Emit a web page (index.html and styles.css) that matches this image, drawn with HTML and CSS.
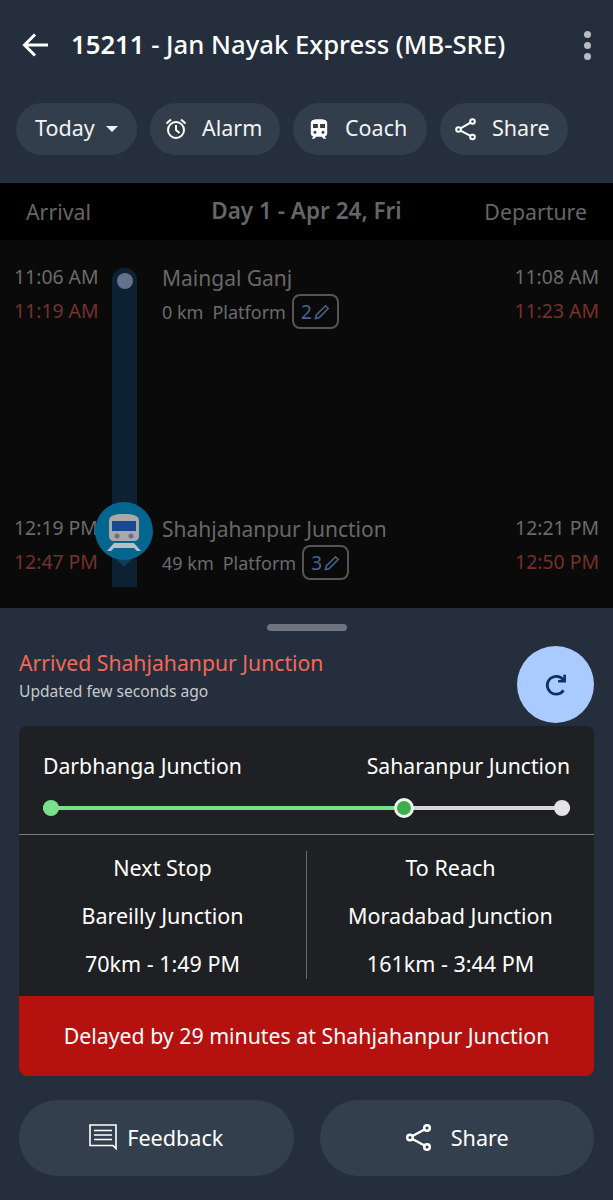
FILE: index.html

```html
<!DOCTYPE html>
<html lang="en">
<head>
<meta charset="UTF-8" />
<meta name="viewport" content="width=device-width, initial-scale=1" />
<title>15211 - Jan Nayak Express</title>
<link rel="stylesheet" href="styles.css">
</head>
<body>

<header class="header">
  <div class="title-row">
    <svg class="back" width="28" height="26" viewBox="0 0 28 26"><path d="M26 13H3M13 2.500L2.500 13 13 23.500" fill="none" stroke="#fff" stroke-width="3"/></svg>
    <h1 class="title"><b>15211</b> - Jan Nayak Express (MB-SRE)</h1>
    <div class="more"><i></i><i></i><i></i></div>
  </div>
  <div class="chips">
    <div class="chip chip-today"><span>Today</span> <span class="caret"></span></div>
    <div class="chip chip-alarm">
      <svg width="24" height="24" viewBox="0 0 24 24" fill="none" stroke="#fff" stroke-width="2"><circle cx="12" cy="13" r="8"/><path d="M12 8v5l3.500 3M2.500 6.500L7 2.500M21.500 6.500L17 2.500"/></svg>
      <span>Alarm</span>
    </div>
    <div class="chip chip-coach">
      <svg width="24" height="24" viewBox="2 1 20 22"><path fill="#fff" fill-rule="evenodd" d="M12 3c-4 0-7.500.4-7.500 3.500v9.500c0 1.500 1 2.700 2.300 3L5.500 20.500v.5h2.200l1.800-2h5l1.800 2h2.200v-.5L17.200 19c1.300-.3 2.300-1.500 2.300-3V6.500C19.500 3.400 16 3 12 3zM6.500 7.500h4.500v3.500H6.500V7.500zm6.500 0h4.500v3.500H13V7.500zM8.300 13.500a1.400 1.400 0 1 1 0 2.800 1.400 1.400 0 0 1 0-2.800zm7.400 0a1.400 1.400 0 1 1 0 2.800 1.400 1.400 0 0 1 0-2.800z"/></svg>
      <span>Coach</span>
    </div>
    <div class="chip chip-share">
      <svg width="24" height="24" viewBox="0 0 24 24" fill="none" stroke="#fff" stroke-width="2"><circle cx="18.500" cy="4.500" r="2.300"/><circle cx="4.500" cy="12.500" r="2.300"/><circle cx="18.500" cy="20" r="2.300"/><path d="M16.500 5.700L6.500 11.300M6.500 13.700l10 5.100"/></svg>
      <span>Share</span>
    </div>
  </div>
</header>

<div class="day-bar">
  <span>Arrival</span>
  <span class="day-label">Day 1 - Apr 24, Fri</span>
  <span class="day-right">Departure</span>
</div>

<section class="timeline">
  <div class="track"><span class="track-dot"></span></div>

  <div class="stop stop-first">
    <div class="times"><div>11:06 AM</div><div class="late">11:19 AM</div></div>
    <div class="info">
      <div class="station">Maingal Ganj</div>
      <div class="meta">
        <span>0 km</span><span>Platform</span>
        <span class="platform">2
          <svg width="18" height="18" viewBox="0 0 18 18" fill="none" stroke="#46648f" stroke-width="1.500"><path d="M2.500 15.500l.8-3.500L12.500 2.800l2.700 2.700L6 14.700z"/></svg>
        </span>
      </div>
    </div>
    <div class="times times-right"><div>11:08 AM</div><div class="late">11:23 AM</div></div>
  </div>

  <div class="stop">
    <div class="times"><div>12:19 PM</div><div class="late">12:47 PM</div></div>
    <div class="info">
      <div class="station">Shahjahanpur Junction</div>
      <div class="meta">
        <span>49 km</span><span>Platform</span>
        <span class="platform">3
          <svg width="18" height="18" viewBox="0 0 18 18" fill="none" stroke="#46648f" stroke-width="1.500"><path d="M2.500 15.500l.8-3.500L12.500 2.800l2.700 2.700L6 14.700z"/></svg>
        </span>
      </div>
    </div>
    <div class="times times-right"><div>12:21 PM</div><div class="late">12:50 PM</div></div>
  </div>

  <div class="marker">
    <svg width="58" height="68" viewBox="0 0 58 68">
      <path d="M20 56h18l-9 9z" fill="#0b3f5c"/>
      <circle cx="29" cy="29" r="29" fill="#04658f"/>
      <path d="M29 12c-9 0-15 1.500-15 7v15c0 3 2 5 5 5h20c3 0 5-2 5-5V19c0-5.500-6-7-15-7z" fill="#a9a9a9"/>
      <rect x="17" y="19" width="24" height="10" fill="#1b4690"/>
      <circle cx="22" cy="34" r="2.500" fill="#5f7480"/>
      <circle cx="36" cy="34" r="2.500" fill="#5f7480"/>
      <path d="M19 41h20l7 8h-4l-3-3H19l-3 3h-4z" fill="#b4c0c6"/>
    </svg>
  </div>
</section>

<section class="sheet">
  <div class="handle"></div>
  <div class="status-row">
    <div>
      <div class="status">Arrived Shahjahanpur Junction</div>
      <div class="updated">Updated few seconds ago</div>
    </div>
    <div class="refresh">
      <svg width="28" height="28" viewBox="0 0 26 26" fill="none" stroke="#0b325f" stroke-width="2.500"><path d="M20 8.500A8.300 8.300 0 1 0 20 18"/><path d="M21 3.500V9.500H15"/></svg>
    </div>
  </div>

  <div class="card">
    <div class="route">
      <div class="route-names"><span>Darbhanga Junction</span><span>Saharanpur Junction</span></div>
      <div class="progress">
        <span class="progress-done"></span>
        <span class="progress-now"></span>
        <span class="progress-end"></span>
      </div>
    </div>
    <div class="next">
      <div class="next-col"><div>Next Stop</div><div>Bareilly Junction</div><div>70km - 1:49 PM</div></div>
      <div class="next-col"><div>To Reach</div><div>Moradabad Junction</div><div>161km - 3:44 PM</div></div>
    </div>
    <div class="delay">Delayed by 29 minutes at Shahjahanpur Junction</div>
  </div>

  <div class="actions">
    <div class="action">
      <svg width="28" height="28" viewBox="0 0 28 28" fill="none" stroke="#fff" stroke-width="1.600"><path d="M1 2h26v23.500l-3-3H1z"/><path d="M5 7.500h18M5 12h18M5 16.500h18"/></svg>
      Feedback
    </div>
    <div class="action action-share">
      <svg width="28" height="28" viewBox="0 0 28 28" fill="none" stroke="#fff" stroke-width="2.500"><circle cx="22" cy="5" r="2.800"/><circle cx="5" cy="14.500" r="2.800"/><circle cx="22" cy="24" r="2.800"/><path d="M19.500 6.500L7.500 13M7.500 16l12 6.500"/></svg>
      Share
    </div>
  </div>
</section>

</body>
</html>
```

FILE: styles.css

```css
* {
  box-sizing: border-box;
}
body {
  margin: 0;
  width: 613px;
  height: 1200px;
  overflow: hidden;
  font-family: 'Noto Sans', 'Open Sans', sans-serif;
  background: #252e3c;
  color: #fff;
}

/* header */
.header {
  height: 183px;
  padding: 0 16px;
  background: #252e3c;
}
.title-row {
  display: flex;
  align-items: center;
  height: 90px;
  padding-left: 6px;
}
.back {
  flex: none;
}
.title {
  flex: 1;
  margin: 0 0 2px 21px;
  font-size: 25.700px;
  font-weight: 500;
  white-space: nowrap;
}
.title b {
  font-weight: 600;
}
.more {
  display: flex;
  flex-direction: column;
  gap: 4px;
  margin-right: 6px;
}
.more i {
  width: 7px;
  height: 7px;
  border-radius: 50%;
  background: #b9bcc2;
}
.chips {
  display: flex;
  gap: 13px;
  margin-top: 13px;
}
.chip {
  display: flex;
  align-items: center;
  gap: 14px;
  height: 52px;
  padding: 0 14px;
  border-radius: 26px;
  background: #333e4c;
  font-size: 21.500px;
  color: #f2f3f4;
}
.chip span:not(.caret) {
  margin-bottom: 4px;
}
.chip-today {
  width: 121px;
  padding-left: 19px;
  gap: 11px;
}
.chip-alarm {
  width: 130px;
}
.chip-coach {
  width: 134px;
}
.chip-share {
  width: 128px;
}
.caret {
  width: 0;
  height: 0;
  border-left: 6px solid transparent;
  border-right: 6px solid transparent;
  border-top: 6px solid #f2f3f4;
}

/* day bar */
.day-bar {
  display: grid;
  grid-template-columns: 1fr auto 1fr;
  align-items: center;
  height: 57px;
  padding: 0 26px;
  background: #000;
  color: #666;
  font-size: 21.300px;
}
.day-label {
  margin-bottom: 2px;
  font-size: 22.500px;
  font-weight: 600;
}
.day-right {
  text-align: right;
}

/* timeline */
.timeline {
  position: relative;
  height: 368px;
  background: #0a0a0a;
}
.track {
  position: absolute;
  left: 112px;
  top: 28px;
  width: 25px;
  height: 319px;
  border-radius: 12px 12px 0 0;
  background: #0c2233;
}
.track-dot {
  display: block;
  width: 16px;
  height: 16px;
  margin: 5px 0 0 4.500px;
  border-radius: 50%;
  background: #62728c;
}
.marker {
  position: absolute;
  left: 95px;
  top: 262px;
  line-height: 0;
}
.stop {
  display: flex;
  height: 117px;
  padding: 20px 14px 0;
}
.stop-first {
  height: 251px;
}
.times {
  width: 148px;
  font-size: 19.400px;
  line-height: 34px;
  color: #6b6b6b;
}
.times-right {
  width: auto;
  text-align: right;
}
.late {
  color: #743229;
}
.info {
  flex: 1;
}
.station {
  font-size: 21px;
  line-height: 36px;
  color: #686868;
  white-space: nowrap;
}
.meta {
  display: flex;
  align-items: center;
  gap: 9px;
  margin-top: -2px;
  font-size: 18px;
  color: #6b6b6b;
}
.platform {
  display: flex;
  align-items: center;
  gap: 1px;
  height: 35px;
  margin-left: -3px;
  padding: 0 6px 0 7px;
  border: 2px solid #555;
  border-radius: 8px;
  color: #46648f;
  font-size: 19px;
}

/* bottom sheet */
.sheet {
  padding: 16px 19px 0;
  background: #252e3c;
}
.handle {
  width: 80px;
  height: 7px;
  margin: 0 auto;
  border-radius: 4px;
  background: #6d7480;
}
.status-row {
  display: flex;
  justify-content: space-between;
  margin-top: 15px;
}
.status {
  margin-top: 2px;
  font-size: 21.200px;
  color: #f0695a;
}
.updated {
  margin-top: 3px;
  font-size: 15.600px;
  color: #c6c9cd;
}
.refresh {
  display: flex;
  align-items: center;
  justify-content: center;
  width: 77px;
  height: 77px;
  border-radius: 50%;
  background: #a9cbff;
}
.card {
  margin-top: 3px;
  height: 350px;
  border-radius: 8px;
  overflow: hidden;
  background: #1f2023;
}
.route {
  height: 109px;
  padding: 25px 24px 0;
  border-bottom: 1.500px solid #7b7b7b;
}
.route-names {
  display: flex;
  justify-content: space-between;
  font-size: 21.200px;
}
.progress {
  position: relative;
  height: 4px;
  margin-top: 26px;
  background: #d5d5d5;
}
.progress-done {
  position: absolute;
  left: 0;
  top: 0;
  width: 360px;
  height: 4px;
  background: #78e08a;
}
.progress-done::before {
  content: "";
  position: absolute;
  left: 0;
  top: -6px;
  width: 16px;
  height: 16px;
  border-radius: 50%;
  background: #78e08a;
}
.progress-now {
  position: absolute;
  left: 351px;
  top: -8px;
  width: 20px;
  height: 20px;
  border: 3px solid #f0f5ee;
  border-radius: 50%;
  background: #3bb04a;
}
.progress-end {
  position: absolute;
  right: 0;
  top: -6px;
  width: 16px;
  height: 16px;
  border-radius: 50%;
  background: #e3e3e3;
}
.next {
  display: grid;
  grid-template-columns: 287px 1fr;
  height: 161px;
  padding-top: 16px;
}
.next-col {
  display: flex;
  flex-direction: column;
  gap: 16px;
  align-items: center;
  height: 128px;
  padding-top: 1px;
  font-size: 21.500px;
  line-height: 32px;
}
.next-col + .next-col {
  border-left: 1.500px solid #6a6a6a;
}
.delay {
  display: flex;
  align-items: center;
  justify-content: center;
  height: 80px;
  padding-bottom: 2px;
  background: #b5120f;
  font-size: 21.300px;
}
.actions {
  display: flex;
  gap: 26px;
  margin-top: 24px;
}
.action {
  flex: 1;
  display: flex;
  align-items: center;
  justify-content: center;
  gap: 10px;
  height: 76px;
  padding-bottom: 2px;
  border-radius: 38px;
  background: #343f4d;
  font-size: 21.600px;
}
.action-share {
  gap: 18px;
}
```
